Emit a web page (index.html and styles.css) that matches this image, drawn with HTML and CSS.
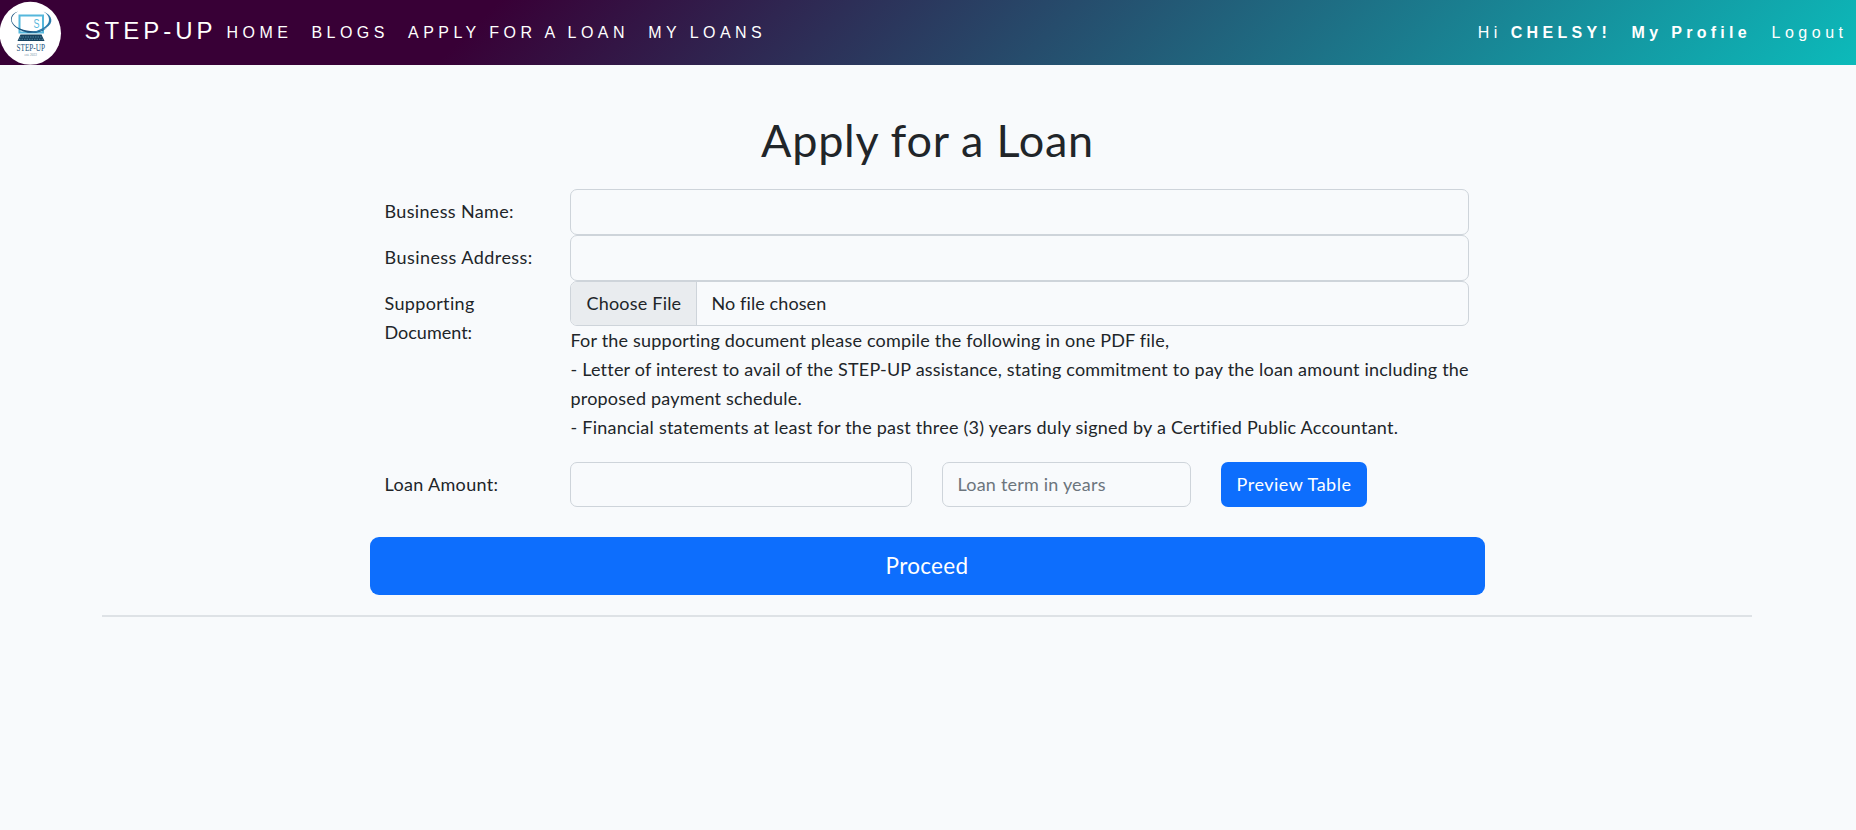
FILE: index.html
```
<!DOCTYPE html>
<html lang="en">
<head>
<meta charset="utf-8">
<title>STEP-UP</title>
<link rel="stylesheet" href="styles.css">
</head>
<body>
<header class="navbar">
  <svg class="logo" width="62" height="65" viewBox="0 0 62 65">
    <ellipse cx="30.3" cy="33.3" rx="30.7" ry="31.5" fill="#fff"/>
    <rect x="19.500" y="15.500" width="23.500" height="17" fill="#fff" stroke="#55b7dc" stroke-width="2"/>
    <path d="M18 11.500C9 16 9.500 24 20 28.500C31 33 42 31 47 28C38 35.500 24 34 16 27.500C8 21 10.500 13.500 18 11.500Z" fill="#1c5680"/>
    <path d="M43.500 11.500C53 15.500 54 23 46 28C41 31.500 35 33 28 33C40 31 49 26 49 20C49 16 47 14 43.500 11.500Z" fill="#2c7cab"/>
    <path d="M20.500 34.500H41.500L44.500 41H17.500Z" fill="#16425f"/>
    <path d="M20 37H42M19 39.300H43" stroke="#7bb5d0" stroke-width=".6" stroke-dasharray="1.500 1"/>
    <text x="33.500" y="27.500" class="logo-mark" textLength="6" lengthAdjust="spacingAndGlyphs">S</text>
    <text x="16.500" y="50.500" class="logo-name" textLength="28.500" lengthAdjust="spacingAndGlyphs">STEP-UP</text>
    <text x="24.500" y="56" class="logo-year" textLength="12.500" lengthAdjust="spacingAndGlyphs">est. 2022</text>
  </svg>
  <a class="brand">STEP-UP</a>
  <nav class="links">
    <a>HOME</a><a>BLOGS</a><a>APPLY FOR A LOAN</a><a>MY LOANS</a>
  </nav>
  <nav class="links account">
    <span>Hi <b>CHELSY!</b></span><a><b>My Profile</b></a><a>Logout</a>
  </nav>
</header>
<main class="container">
  <h1>Apply for a Loan</h1>
  <form class="form">
    <div class="row">
      <label class="label">Business Name:</label>
      <div class="field"><input class="control" type="text"></div>
    </div>
    <div class="row">
      <label class="label wide">Business Address:</label>
      <div class="field"><input class="control" type="text"></div>
    </div>
    <div class="row document">
      <label class="label">Supporting<br><span class="tight">Document:</span></label>
      <div class="field">
        <div class="control file"><span class="choose">Choose File</span><span class="chosen">No file chosen</span></div>
        <p class="help">For the supporting document please compile the following in one PDF file,<br>- Letter of interest to avail of the STEP-UP assistance, stating commitment to pay the loan amount including the<br>proposed payment schedule.<br><span class="statements">- Financial statements at least for the past three (3) years duly signed by a Certified Public Accountant.</span></p>
      </div>
    </div>
    <div class="row loan">
      <label class="label">Loan Amount:</label>
      <div class="field amounts">
        <input class="control amount" type="text">
        <input class="control term" type="text" placeholder="Loan term in years">
        <button class="button preview" type="button">Preview Table</button>
      </div>
    </div>
    <button class="button proceed" type="button">Proceed</button>
  </form>
  <hr class="rule">
</main>
</body>
</html>
```
FILE: styles.css
```
* { box-sizing: border-box; }

body {
  margin: 0;
  background: #f8fafc;
  color: #212529;
  font: 18px/29px Lato, "Open Sans", sans-serif;
  letter-spacing: 0.2px;
}

.navbar {
  display: flex;
  align-items: center;
  height: 65px;
  background: linear-gradient(315deg, #0cbaba 0%, #380036 74%);
  color: #fff;
  font-family: "Liberation Sans", Arial, sans-serif;
  font-size: 16px;
  letter-spacing: 4.45px;
  white-space: nowrap;
}
.logo { flex: none; letter-spacing: 0; }
.logo-mark { font: 12px "Liberation Sans", sans-serif; fill: #55b7dc; }
.logo-name { font: 10px "Liberation Serif", serif; fill: #1c5680; }
.logo-year { font: 4px "Liberation Serif", serif; fill: #6d8ca3; }
.brand { margin-left: 22.5px; width: 142px; font-size: 24px; letter-spacing: 4px; padding-bottom: 4px; }
.links { display: flex; gap: 19.2px; }
.account { margin-left: auto; padding-right: 8.5px; gap: 20.5px; letter-spacing: 4.5px; }
.account b { letter-spacing: 4.3px; }

.container { width: 1650px; margin: 0 auto 0 102px; padding-top: 48px; }

h1 {
  margin: 0;
  height: 76px;
  padding-left: 1px;
  text-align: center;
  font-size: 45px;
  font-weight: 400;
  line-height: 54px;
  letter-spacing: 0.75px;
}

.form { width: 1115px; margin: 0 auto; }
.row { display: flex; height: 46px; padding: 0 15px; }
.label { width: 185px; padding-top: 8px; letter-spacing: 0.34px; }
.wide { letter-spacing: 0.45px; }
.tight { letter-spacing: 0; }
.field { flex: 1; min-width: 0; white-space: nowrap; }

.control {
  display: block;
  width: 899px;
  height: 46px;
  padding: 0 15px;
  border: 1px solid #ced4da;
  border-radius: 7px;
  background: #f8fafc;
  color: #212529;
  font: inherit;
  letter-spacing: inherit;
}
.control::placeholder { color: #6c757d; opacity: 1; }

.document { height: 182px; }
.file { display: flex; height: 45px; padding: 0; overflow: hidden; line-height: 43px; }
.choose { width: 126px; padding-left: 16px; background: #e9ecef; border-right: 1px solid #ced4da; }
.chosen { padding-left: 15px; letter-spacing: 0.1px; }
.help { margin: 0; padding-left: 1px; }
.statements { letter-spacing: 0.24px; }

.loan { height: 75px; margin-top: -1px; }
.amounts { display: flex; gap: 30px; }
.amounts .control, .preview { height: 45px; }
.amounts .control { padding-bottom: 2px; }
.amounts .amount { width: 342px; }
.amounts .term { width: 249px; }

.button {
  border: 0;
  border-radius: 7px;
  background: #0d6efd;
  color: #fff;
  font: inherit;
}
.preview { width: 146px; padding: 0 0 1px 1px; letter-spacing: 0.5px; }
.proceed { display: block; width: 100%; height: 58px; padding-bottom: 3px; border-radius: 9px; font-size: 22.5px; letter-spacing: 0.3px; }

.rule { height: 2px; margin: 20px 0 0; border: 0; background: #dee2e6; }
```
